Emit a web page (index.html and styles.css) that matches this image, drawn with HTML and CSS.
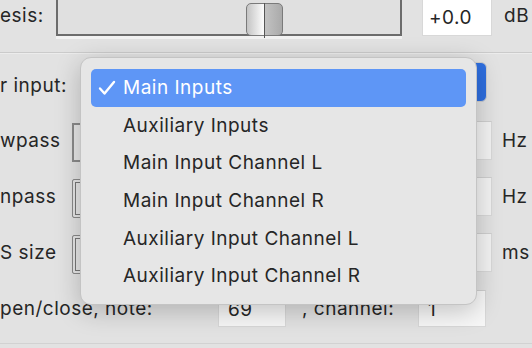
FILE: index.html
```html
<!DOCTYPE html>
<html lang="en">
<head>
    <meta charset="UTF-8">
    <title>Sidechain settings</title>
    <link rel="stylesheet" href="styles.css">
</head>
<body>
    <div class="panel">
        <!-- hysteresis -->
        <div class="row row-top">
            <span class="label">esis:</span>
            <div class="slider">
                <div class="thumb"></div>
            </div>
            <div class="field field-db">+0.0</div>
            <span class="unit">dB</span>
        </div>

        <div class="separator"></div>

        <!-- input source -->
        <div class="row row-input">
            <span class="label">r input:</span>
            <div class="popup"></div>
        </div>

        <div class="row row-filter">
            <span class="label">wpass</span>
            <div class="field field-left"></div>
            <div class="field field-right"></div>
            <span class="unit">Hz</span>
        </div>
        <div class="row row-filter">
            <span class="label">npass</span>
            <div class="field field-left inner"></div>
            <div class="field field-right"></div>
            <span class="unit">Hz</span>
        </div>
        <div class="row row-filter">
            <span class="label">S size</span>
            <div class="field field-left inner"></div>
            <div class="field field-right"></div>
            <span class="unit">ms</span>
        </div>

        <div class="row row-note">
            <span class="label">pen/close, note:</span>
            <div class="field field-small">69</div>
            <span class="label-mid">, channel:</span>
            <div class="field field-small">1</div>
        </div>
    </div>

    <!-- open popup menu -->
    <ul class="menu">
        <li class="item selected">
            <svg class="check" width="18" height="16" viewBox="0 0 18 16">
                <polyline points="2,8.5 6.5,13.5 16,2" fill="none" stroke="#fff" stroke-width="2.4" stroke-linecap="round" stroke-linejoin="round"/>
            </svg>Main Inputs
        </li>
        <li class="item">Auxiliary Inputs</li>
        <li class="item">Main Input Channel L</li>
        <li class="item">Main Input Channel R</li>
        <li class="item">Auxiliary Input Channel L</li>
        <li class="item">Auxiliary Input Channel R</li>
    </ul>
</body>
</html>
```

FILE: styles.css
```css
/* window */
body {
    margin: 0;
    width: 532px;
    height: 348px;
    overflow: hidden;
    background-color: #e2e2e2;
    font-family: Inter, 'Noto Sans', sans-serif;
    font-size: 19px;
    letter-spacing: 0.5px;
    color: #262626;
    position: relative;
}

.panel {
    display: flex;
    flex-direction: column;
    height: 343px;
    border-bottom: 1px solid #d2d2d2;
}

.row {
    display: flex;
    align-items: center;
    position: relative;
}

.label {
    flex: none;
}

.unit {
    margin-left: 10px;
}

/* hysteresis row */
.row-top {
    height: 42px;
    margin-top: -4px;
    align-items: flex-start;
}

.row-top .label {
    margin-top: 8px;
    width: 56px;
}

.slider {
    width: 342px;
    height: 36px;
    border: 2px solid #6c6c6c;
    border-top-color: #888;
    background-color: #e0e0e0;
    box-shadow: 0 3px 0 #f2f2f2;
    position: relative;
}

.thumb {
    position: absolute;
    left: 188px;
    top: 5px;
    width: 35px;
    height: 31px;
    border: 1px solid #7a7a7a;
    border-radius: 5px;
    background: linear-gradient(to right, #c4c4c4, #fbfbfb 47%, #c2c2c2 52%, #aaaaaa);
}

.thumb::after {
    content: "";
    position: absolute;
    left: 17px;
    top: -1px;
    width: 1px;
    height: 35px;
    background-color: #555;
}

.field {
    background-color: #fff;
    border: 1px solid #d8d8d8;
    border-top-color: #cfcfcf;
    box-sizing: border-box;
    padding-left: 6px;
}

.field-db {
    margin-left: 20px;
    width: 70px;
    height: 40px;
    line-height: 44px;
    border-top: none;
}

.row-top .unit {
    margin-top: 8px;
    margin-left: 12px;
}

.separator {
    margin-top: 14px;
    height: 1px;
    background-color: #cbcbcb;
    border-bottom: 1px solid #ececec;
}

/* input row */
.row-input {
    height: 54px;
    margin-top: 4px;
}

.popup {
    position: absolute;
    left: 420px;
    top: 4px;
    width: 65px;
    height: 38px;
    border-radius: 6px;
    background-color: #2f6fe0;
    border: 1px solid #cfcfcf;
}

/* filter rows */
.row-filter {
    height: 56px;
}

.field-left {
    position: absolute;
    left: 72px;
    top: 11px;
    width: 60px;
    height: 39px;
    background-color: #e6e6e6;
    border: 2px solid #8a8a8a;
}

.field-left.inner {
    border-width: 1px;
    box-shadow: inset 0 0 0 2px #e6e6e6, inset 0 0 0 3px #777;
    border-radius: 2px;
}

.field-right {
    margin-left: auto;
    width: 70px;
    height: 39px;
    background-color: #f3f3f3;
}

.row-filter .unit {
    width: 30px;
    margin-left: 10px;
}

/* note row */
.row-note {
    height: 60px;
    margin-top: -2px;
}

.row-note .label {
    width: 218px;
}

.field-small {
    width: 68px;
    height: 37px;
    line-height: 37px;
    padding-left: 9px;
    background-color: #f7f7f7;
}

.label-mid {
    width: 132px;
    padding-left: 16px;
    box-sizing: border-box;
}

/* popup menu */
.menu {
    position: absolute;
    left: 80px;
    top: 57px;
    width: 397px;
    height: 248px;
    margin: 0;
    padding: 11px 10px;
    box-sizing: border-box;
    list-style: none;
    background-color: #e6e6e6;
    border: 1px solid #c4c4c4;
    border-radius: 11px;
    box-shadow: 0 6px 26px rgba(0, 0, 0, 0.22);
}

.item {
    height: 37.7px;
    line-height: 37px;
    padding-left: 32px;
    border-radius: 5px;
    position: relative;
}

.item.selected {
    background-color: #5e96f6;
    color: #fff;
}

.check {
    position: absolute;
    left: 7px;
    top: 11px;
}
```
